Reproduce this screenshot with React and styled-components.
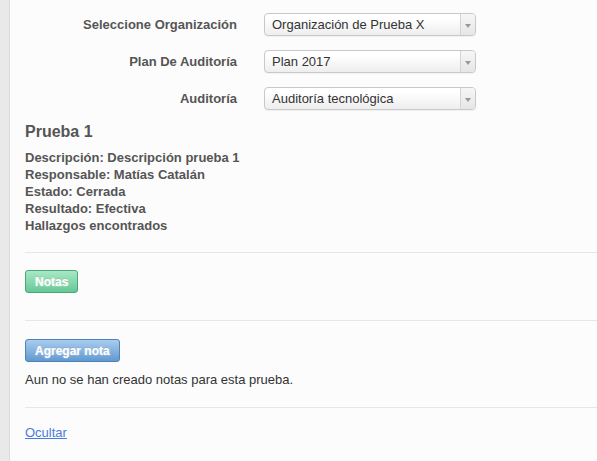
import styled, { createGlobalStyle } from "styled-components";

const GlobalStyle = createGlobalStyle`
  html, body {
    margin: 0;
    padding: 0;
    background: #fcfcfc;
    font-family: "Liberation Sans", Arial, sans-serif;
  }
`;

const Page = styled.div`
  display: flex;
  min-height: 461px;
`;

const SideStrip = styled.div`
  width: 9px;
  flex-shrink: 0;
  background: #e9e9e9;
  border-right: 1px solid #dcdcdc;
`;

const Main = styled.div`
  flex: 1;
  padding: 13px 0 0 15px;
`;

const Form = styled.div`
  display: grid;
  grid-template-columns: 212px 212px;
  column-gap: 27px;
  row-gap: 14px;
  align-items: center;
`;

const Label = styled.label`
  text-align: right;
  font-size: 13px;
  font-weight: bold;
  color: #555;
`;

const Select = styled.div`
  display: flex;
  height: 23px;
  box-sizing: border-box;
  border: 1px solid #c8c8c8;
  border-radius: 4px;
  background: linear-gradient(#ffffff 20%, #eeeeee);
  box-shadow: 0 1px 1px rgba(0, 0, 0, 0.05);
  font-size: 13px;
  color: #333;
`;

const SelectText = styled.span`
  flex: 1;
  padding: 0 7px;
  line-height: 21px;
  white-space: nowrap;
  overflow: hidden;
`;

const SelectArrow = styled.span`
  width: 14px;
  border-left: 1px solid #d4d4d4;
  display: flex;
  align-items: center;
  justify-content: center;
  background: linear-gradient(#f6f6f6, #e6e6e6);
  border-radius: 0 3px 3px 0;

  &::after {
    content: "";
    border-left: 3px solid transparent;
    border-right: 3px solid transparent;
    border-top: 4px solid #999;
    margin-top: 2px;
  }
`;

const Title = styled.h3`
  margin: 13px 0 8px;
  font-size: 16px;
  font-weight: bold;
  color: #555;
`;

const Details = styled.div`
  font-size: 13px;
  font-weight: bold;
  color: #555;
  line-height: 17px;
`;

const Rule = styled.hr`
  margin: ${({ $top }) => $top}px 0 0;
  border: 0;
  border-top: 1px solid #e6e6e6;
`;

const Button = styled.button`
  display: block;
  margin-top: ${({ $top }) => $top}px;
  padding: 0 9px;
  height: 23px;
  font-family: inherit;
  font-size: 12px;
  font-weight: bold;
  color: #fff;
  text-shadow: 0 0 2px rgba(255, 255, 255, 0.6), 0 -1px 0 rgba(0, 0, 0, 0.15);
  border-radius: 3px;
  border: 1px solid ${({ $tone }) => ($tone === "green" ? "#4aa878" : "#4f82b6")};
  background: ${({ $tone }) =>
    $tone === "green"
      ? "linear-gradient(#a8e8c4, #66c896)"
      : "linear-gradient(#a9cdef, #6199d0)"};
  cursor: pointer;
`;

const Note = styled.p`
  margin: 10px 0 0;
  font-size: 13px;
  color: #333;
`;

const Link = styled.a`
  display: inline-block;
  margin-top: 17px;
  font-size: 13px;
  color: #4a7ae0;
  text-decoration: underline;
`;

const fields = [
  ["Seleccione Organización", "Organización de Prueba X"],
  ["Plan De Auditoría", "Plan 2017"],
  ["Auditoría", "Auditoría tecnológica"],
];

const FieldRow = ({ label, value }) => (
  <>
    <Label>{label}</Label>
    <Select>
      <SelectText>{value}</SelectText>
      <SelectArrow />
    </Select>
  </>
);

const App = () => (
  <>
    <GlobalStyle />
    <Page>
      <SideStrip />
      <Main>
        <Form>
          {fields.map(([label, value]) => (
            <FieldRow key={label} label={label} value={value} />
          ))}
        </Form>
        <Title>Prueba 1</Title>
        <Details>
          <div>Descripción: Descripción prueba 1</div>
          <div>Responsable: Matías Catalán</div>
          <div>Estado: Cerrada</div>
          <div>Resultado: Efectiva</div>
          <div>Hallazgos encontrados</div>
        </Details>
        <Rule $top={18} />
        <Button $tone="green" $top={17}>Notas</Button>
        <Rule $top={27} />
        <Button $tone="blue" $top={18}>Agregar nota</Button>
        <Note>Aun no se han creado notas para esta prueba.</Note>
        <Rule $top={20} />
        <Link href="#">Ocultar</Link>
      </Main>
    </Page>
  </>
);

export default App;
